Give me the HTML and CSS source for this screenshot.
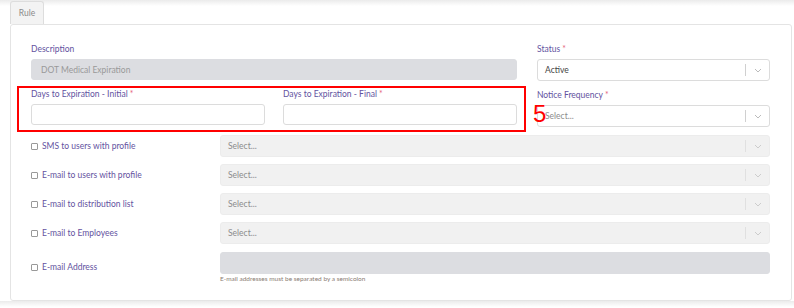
FILE: index.html
```html
<!DOCTYPE html>
<html lang="en">
<head>
    <meta charset="UTF-8">
    <title>Rule</title>
    <link rel="stylesheet" href="styles.css">
</head>
<body>
    <div class="tabs">
        <div class="tab">Rule</div>
    </div>
    <div class="card">
        <div class="row-top">
            <div class="left">
                <div class="field">
                    <label>Description</label>
                    <input type="text" class="input disabled-dark" value="DOT Medical Expiration" readonly>
                </div>
                <div class="days">
                    <div class="field">
                        <label>Days to Expiration - Initial <span class="req">*</span></label>
                        <input type="text" class="input">
                    </div>
                    <div class="field">
                        <label>Days to Expiration - Final <span class="req">*</span></label>
                        <input type="text" class="input">
                    </div>
                    <div class="highlight"></div>
                </div>
            </div>
            <div class="right">
                <div class="field">
                    <label>Status <span class="req">*</span></label>
                    <div class="select">
                        <span class="value">Active</span>
                        <span class="sep"></span>
                        <svg class="chev" width="8" height="5" viewBox="0 0 8 5"><path d="M1 1l3 3 3-3" fill="none" stroke="#bbb" stroke-width="1"/></svg>
                    </div>
                </div>
                <div class="field field-notice">
                    <label>Notice Frequency <span class="req">*</span></label>
                    <div class="select">
                        <span class="placeholder">Select...</span>
                        <span class="sep"></span>
                        <svg class="chev" width="8" height="5" viewBox="0 0 8 5"><path d="M1 1l3 3 3-3" fill="none" stroke="#bbb" stroke-width="1"/></svg>
                    </div>
                    <span class="mark">5</span>
                </div>
            </div>
        </div>

        <div class="options">
            <div class="opt">
                <label class="check"><input type="checkbox"> SMS to users with profile</label>
                <div class="select disabled">
                    <span class="placeholder">Select...</span>
                    <span class="sep"></span>
                    <svg class="chev" width="8" height="5" viewBox="0 0 8 5"><path d="M1 1l3 3 3-3" fill="none" stroke="#ccc" stroke-width="1"/></svg>
                </div>
            </div>
            <div class="opt">
                <label class="check"><input type="checkbox"> E-mail to users with profile</label>
                <div class="select disabled">
                    <span class="placeholder">Select...</span>
                    <span class="sep"></span>
                    <svg class="chev" width="8" height="5" viewBox="0 0 8 5"><path d="M1 1l3 3 3-3" fill="none" stroke="#ccc" stroke-width="1"/></svg>
                </div>
            </div>
            <div class="opt">
                <label class="check"><input type="checkbox"> E-mail to distribution list</label>
                <div class="select disabled">
                    <span class="placeholder">Select...</span>
                    <span class="sep"></span>
                    <svg class="chev" width="8" height="5" viewBox="0 0 8 5"><path d="M1 1l3 3 3-3" fill="none" stroke="#ccc" stroke-width="1"/></svg>
                </div>
            </div>
            <div class="opt">
                <label class="check"><input type="checkbox"> E-mail to Employees</label>
                <div class="select disabled">
                    <span class="placeholder">Select...</span>
                    <span class="sep"></span>
                    <svg class="chev" width="8" height="5" viewBox="0 0 8 5"><path d="M1 1l3 3 3-3" fill="none" stroke="#ccc" stroke-width="1"/></svg>
                </div>
            </div>
            <div class="opt opt-email">
                <label class="check"><input type="checkbox"> E-mail Address</label>
                <div class="email-col">
                    <input type="text" class="input disabled-dark" readonly>
                    <div class="help">E-mail addresses must be separated by a semicolon</div>
                </div>
            </div>
        </div>
    </div>
</body>
</html>
```

FILE: styles.css
```css
body {
    margin: 0;
    background: linear-gradient(#ebebeb, #fff 6px);
    font-family: 'Lato', 'Open Sans', sans-serif;
    font-size: 8.5px;
    color: #555;
}
.tabs {
    padding-left: 10px;
    height: 24px;
    display: flex;
    align-items: flex-end;
}
.tab {
    width: 34px;
    height: 23px;
    box-sizing: border-box;
    border: 1px solid #ddd;
    border-bottom: none;
    border-radius: 3px 3px 0 0;
    background-color: #f3f3f3;
    color: #8a8a8a;
    display: flex;
    align-items: center;
    justify-content: center;
}
.card {
    margin: 0 2px 0 10px;
    height: 277px;
    box-sizing: border-box;
    border: 1px solid #e4e4e4;
    border-radius: 3px;
    padding: 18px 21px 0 20px;
    background-color: #fff;
}
.row-top {
    display: grid;
    grid-template-columns: 1fr 233px;
    gap: 20px;
}
.field label {
    display: block;
    height: 12px;
    line-height: 12px;
    margin-bottom: 4px;
    color: #6352a0;
}
.req {
    color: #e5647e;
}
.field-notice, .days {
    margin-top: 8px;
}
.days {
    display: grid;
    grid-template-columns: 1fr 1fr;
    gap: 18px;
    position: relative;
}
.highlight {
    position: absolute;
    left: -14px;
    right: -9px;
    top: -2px;
    bottom: -7px;
    border: 2px solid #ff0000;
}
.input {
    display: block;
    width: 100%;
    height: 21px;
    box-sizing: border-box;
    border: 1px solid #dcdcdc;
    border-radius: 3px;
    padding: 0 9px;
    font-family: inherit;
    font-size: 8.5px;
    color: #999;
    background-color: #fff;
}
.disabled-dark {
    background-color: #dcdde1;
    border-color: #dcdde1;
}
.select {
    height: 22px;
    box-sizing: border-box;
    border: 1px solid #dcdcdc;
    border-radius: 3px;
    display: flex;
    align-items: center;
    padding-left: 7px;
    background-color: #fff;
}
.select .value {
    flex: 1;
    color: #444;
}
.select .placeholder {
    flex: 1;
    color: #8c8c8c;
}
.sep {
    width: 1px;
    height: 12px;
    background-color: #d0d0d0;
    margin-right: 8px;
}
.chev {
    margin-right: 7px;
}
.select.disabled {
    background-color: #f1f1f1;
    border-color: #ececec;
}
.select.disabled .sep {
    background-color: #e0e0e0;
}
.field-notice {
    position: relative;
}
.mark {
    position: absolute;
    left: -4px;
    top: 14px;
    font-family: 'Liberation Sans', sans-serif;
    font-size: 24px;
    line-height: 22px;
    color: #ff0000;
}
.options {
    margin-top: 8px;
    display: flex;
    flex-direction: column;
    gap: 7px;
}
.opt {
    display: grid;
    grid-template-columns: 189px 1fr;
    align-items: center;
}
.opt-email {
    align-items: start;
}
.opt-email .check {
    height: 22px;
    margin-top: 5px;
}
.check {
    display: flex;
    align-items: center;
    gap: 4px;
    color: #6352a0;
}
.check input {
    appearance: none;
    width: 7px;
    height: 7px;
    margin: 0;
    border: 1px solid #999;
    border-radius: 1px;
    background-color: #fff;
}
.email-col {
    margin-top: 1px;
}
.email-col .input {
    height: 22px;
}
.help {
    margin-top: 1px;
    font-size: 6.5px;
    color: #8a7c73;
}
```
